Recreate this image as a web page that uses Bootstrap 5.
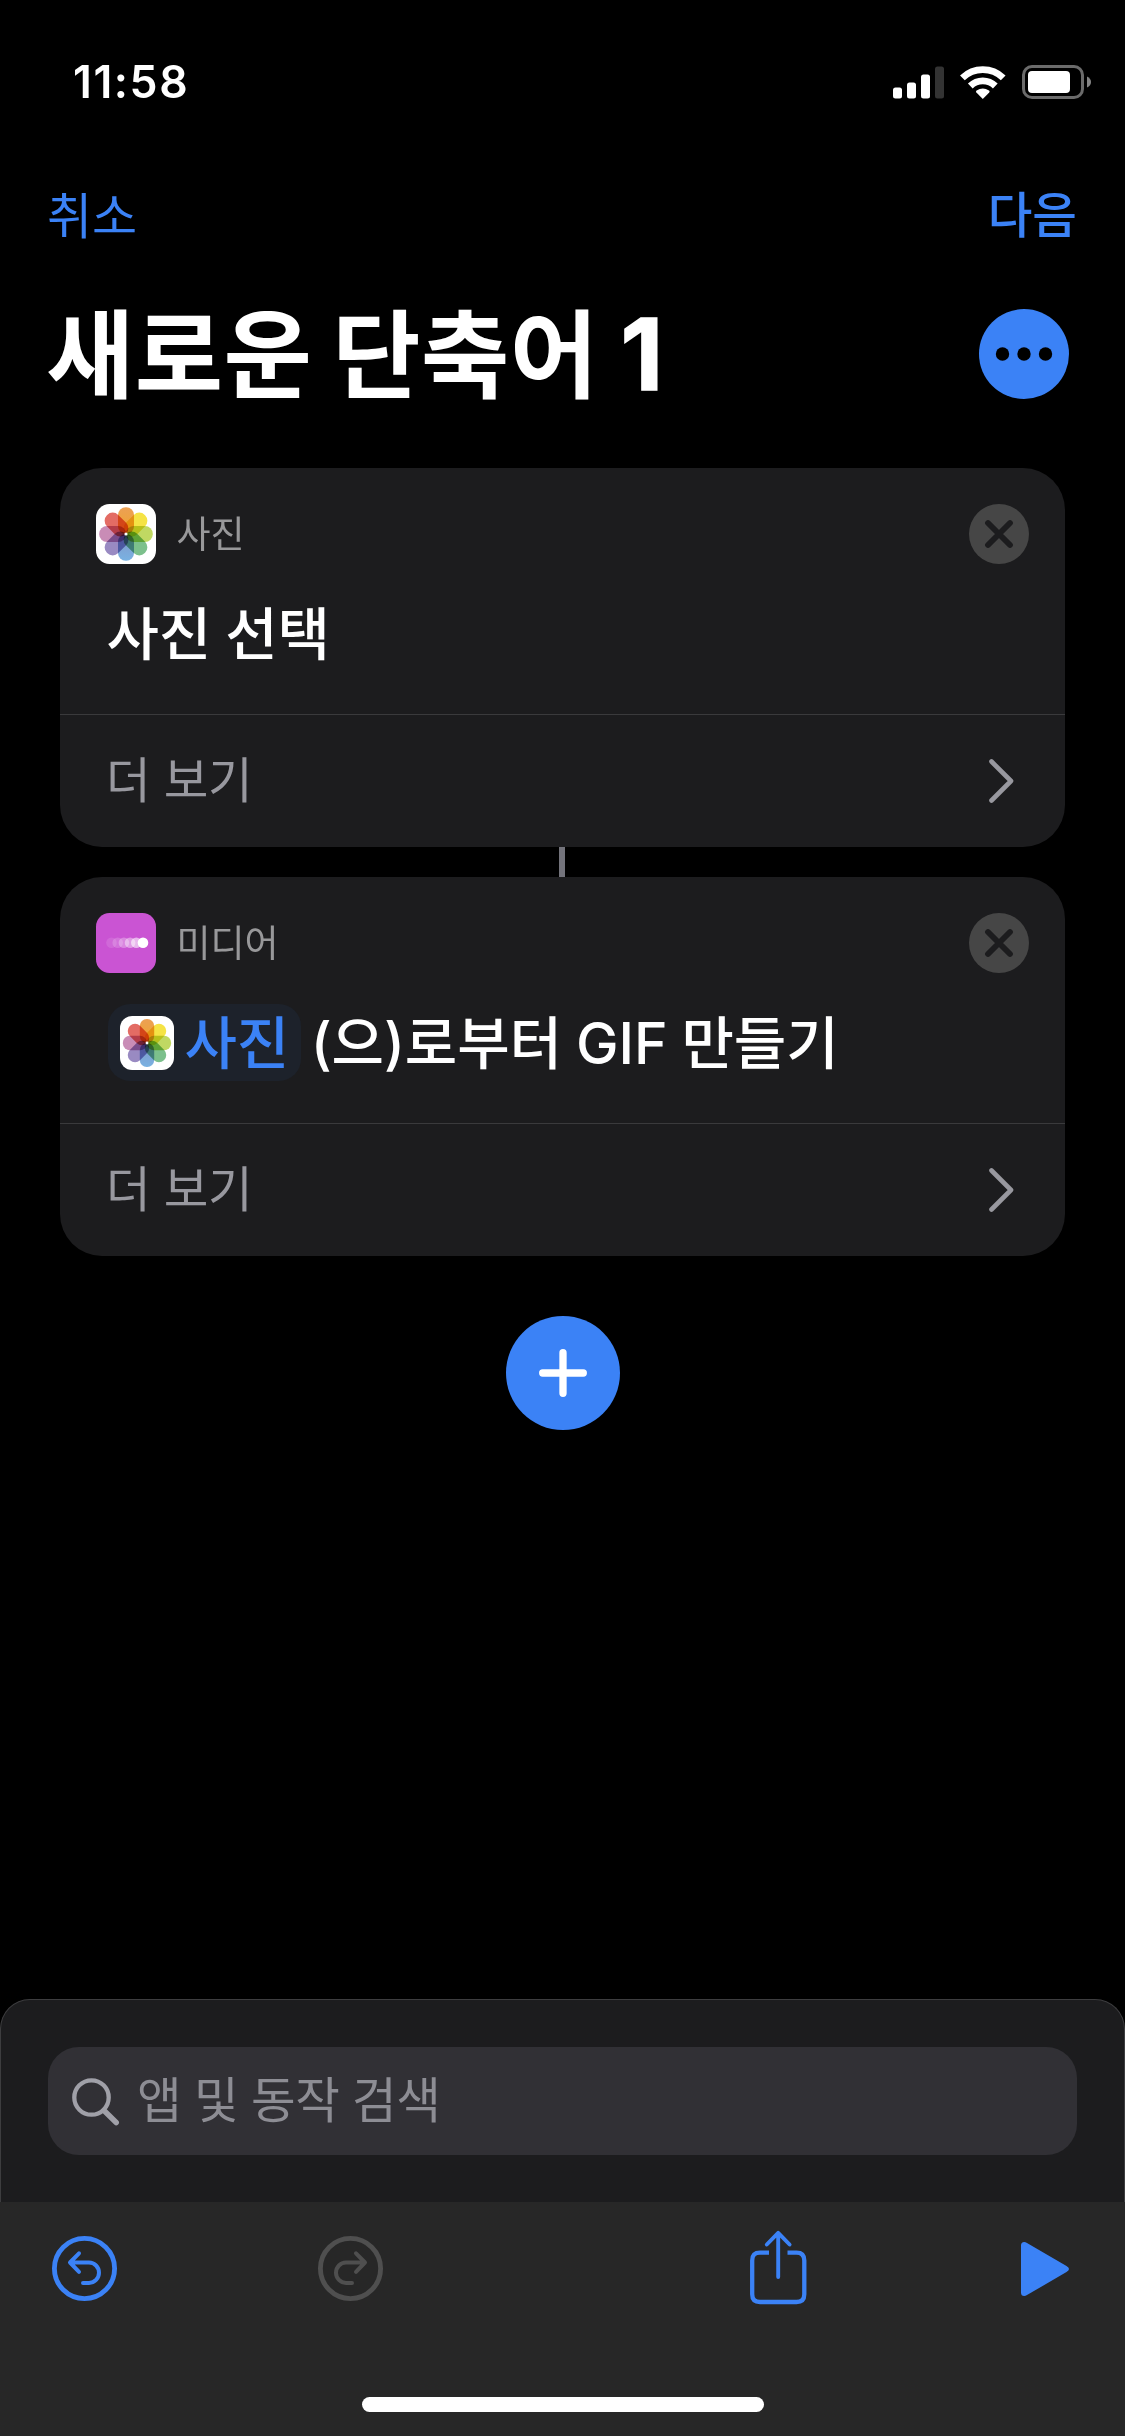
<!DOCTYPE html>
<html lang="ko" data-bs-theme="dark">
<head>
<meta charset="utf-8">
<meta name="viewport" content="width=device-width, initial-scale=1">
<title>새로운 단축어 1</title>
<link href="https://cdn.jsdelivr.net/npm/bootstrap@5.3.0/dist/css/bootstrap.min.css" rel="stylesheet">
<style>
  :root { --accent: #3b82f6; --panel: #1c1c1e; --muted: #98989f; }
  body { background: #000; color: #fff; font-family: Inter, "Noto Sans CJK KR", sans-serif; line-height: 1; }
  svg { display: block; flex-shrink: 0; overflow: visible; }
  .screen { height: 2436px; overflow: hidden; }
  .status-bar { height: 164px; padding: 0 34px 0 73px; }
  .clock { font-size: 44.5px; font-weight: 600; letter-spacing: 1.6px; }
  .status-icons { gap: 16px; }
  .top-nav { height: 104px; padding: 0 48px 0 47px; font-size: 49px; }
  .next-link { font-weight: 500; font-size: 48.5px; }
  .text-accent { color: var(--accent); }
  .title-row { height: 172px; padding: 0 56px 0 46px; }
  .screen-title { font-size: 96px; font-weight: 700; letter-spacing: .4px; word-spacing: -3px; line-height: 1; }
  .title-num { font-size: 99px; margin-left: 2px; letter-spacing: 0; -webkit-text-stroke: 1.5px #fff; }
  .round-btn { background: var(--accent); width: 90px; height: 90px; }
  .add-btn { width: 114px; height: 114px; margin-top: 60px; }
  .flow { padding: 28px 60px 0; }
  .action-card { background: var(--panel); border: 0; border-radius: 42px; width: 100%; height: 379px; }
  .action-head { height: 246px; padding: 36px 36px 0; }
  .action-app { gap: 20.5px; color: #98989a; font-size: 37px; }
  .action-text { height: 77px; margin: 31px 0 0 12px; font-size: 57px; font-weight: 500; letter-spacing: -.1px; word-spacing: -1px; }
  .action-text .phrase { padding-top: 1px; }
  .action-text > .phrase:first-child { margin-left: -1.5px; }
  .photo-chip { background: #1d222b; border-radius: 22px; height: 77px; padding: 0 12px; gap: 10.5px; margin-right: 9.5px; }
  .action-more { border-top: 1px solid #3a3a3c; height: 133px; padding: 0 51px 0 46px; font-size: 48.5px; letter-spacing: -.3px; color: var(--muted); }
  .link-line { width: 6px; height: 30px; background: #73737b; margin-right: 2px; }
  .sheet { background: var(--panel); border: 1px solid #3d3d3f; border-bottom: 0; border-radius: 30px 30px 0 0; height: 203px; padding: 47px 47px 0; }
  .search-box { background: #313035; border-radius: 31px; height: 108px; padding: 1px 24px 0; gap: 17px; font-size: 48.5px; letter-spacing: -.4px; word-spacing: -.5px; color: #8d8d94; }
  .tool-area { background: #272727; height: 234px; }
  .tool-row { height: 133px; padding: 0 56px 0 52px; }
  .tools-left { gap: 200.5px; }
  .tools-right { gap: 214px; }
  .share-icon { margin-bottom: 5px; }
  .home-bar { width: 402px; height: 15px; border-radius: 8px; background: #fff; margin-top: 62px; }
  .petals { isolation: isolate; }
  .petals rect { mix-blend-mode: multiply; }
</style>
</head>
<body>
<svg width="0" height="0" class="position-absolute" aria-hidden="true">
  <defs>
    <linearGradient id="gN" x1="0" y1="0" x2="0" y2="1"><stop offset="0" stop-color="#eca055"/><stop offset="1" stop-color="#f0a62a"/></linearGradient>
    <linearGradient id="gS" x1="0" y1="0" x2="0" y2="1"><stop offset="0" stop-color="#79b2e2"/><stop offset="1" stop-color="#8496c8"/></linearGradient>
    <symbol id="photos" viewBox="0 0 60 60">
      <rect width="60" height="60" rx="13.5" fill="#fff"/>
      <g class="petals">
        <rect x="22" y="3.2" width="16" height="26.8" rx="7.8" fill="url(#gN)"/>
        <rect x="22" y="3.2" width="16" height="26.8" rx="7.8" fill="#f5e345" transform="rotate(45 30 30)"/>
        <rect x="22" y="3.2" width="16" height="26.8" rx="7.8" fill="#c0d862" transform="rotate(90 30 30)"/>
        <rect x="22" y="3.2" width="16" height="26.8" rx="7.8" fill="#7cc08c" transform="rotate(135 30 30)"/>
        <rect x="22" y="3.2" width="16" height="26.8" rx="7.8" fill="url(#gS)" transform="rotate(180 30 30)"/>
        <rect x="22" y="3.2" width="16" height="26.8" rx="7.8" fill="#998ac2" transform="rotate(225 30 30)"/>
        <rect x="22" y="3.2" width="16" height="26.8" rx="7.8" fill="#c98cb6" transform="rotate(270 30 30)"/>
        <rect x="22" y="3.2" width="16" height="26.8" rx="7.8" fill="#e36c64" transform="rotate(315 30 30)"/>
      </g>
      <circle cx="30" cy="30" r="1.6" fill="#fff"/>
    </symbol>
    <symbol id="close" viewBox="0 0 60 60">
      <circle cx="30" cy="30" r="30" fill="#464646"/>
      <path d="M19 19 41 41M41 19 19 41" stroke="#1c1c1e" stroke-width="5.8" stroke-linecap="round"/>
    </symbol>
    <symbol id="chevron" viewBox="0 0 25 44">
      <path d="M2.5 2.5 22 22 2.5 41.5" fill="none" stroke="#98989f" stroke-width="4.6" stroke-linecap="round" stroke-linejoin="round"/>
    </symbol>
    <symbol id="turn" viewBox="0 0 65 65">
      <g fill="none" stroke="currentColor" stroke-linecap="round" stroke-linejoin="round">
        <circle cx="32.5" cy="32.5" r="30.1" stroke-width="4.8"/>
        <path d="M27 17.3 18 26.5 27 35.8M18.5 26.5H37a10 10.2 0 0 1 0 20.4H31" stroke-width="4"/>
      </g>
    </symbol>
  </defs>
</svg>

<div class="screen d-flex flex-column">
  <div class="status-bar d-flex justify-content-between align-items-center">
    <div class="clock">11:58</div>
    <div class="status-icons d-flex align-items-center">
      <svg width="51" height="33" fill="#fff"><rect y="21.5" width="9" height="11" rx="2.5"/><rect x="14" y="16.5" width="9" height="16" rx="2.5"/><rect x="28" y="8.5" width="9" height="24" rx="2.5"/><rect x="42" y=".5" width="9" height="32" rx="2.5" fill="#333"/></svg>
      <svg width="46" height="33"><g fill="none" stroke="#fff" stroke-width="6.8"><path d="M2.4 11.9A29.4 29.4 0 0 1 43.2 11.9"/><path d="M10.3 20A18 18 0 0 1 35.3 20"/></g><path d="M22.8 33 16.4 26.4q-1-1.1.2-1.9 6.2-4 12.4 0 1.2.8.2 1.9Z" fill="#fff"/></svg>
      <svg width="69" height="34"><rect x="1.5" y="1.5" width="59" height="31" rx="8.5" fill="none" stroke="#6b6b6b" stroke-width="3"/><rect x="6" y="6" width="42" height="22" rx="4" fill="#fff"/><path d="M65 11.5q4 2 4 5.5t-4 5.5Z" fill="#858585"/></svg>
    </div>
  </div>

  <nav class="top-nav d-flex justify-content-between align-items-center text-accent">
    <span>취소</span>
    <span class="next-link">다음</span>
  </nav>

  <header class="title-row d-flex justify-content-between align-items-center">
    <h1 class="screen-title m-0">새로운 단축어 <span class="title-num">1</span></h1>
    <div class="round-btn rounded-circle d-flex align-items-center justify-content-center">
      <svg width="58" height="14"><circle cx="7.5" cy="7" r="6.7"/><circle cx="29" cy="7" r="6.7"/><circle cx="50.5" cy="7" r="6.7"/></svg>
    </div>
  </header>

  <main class="flow d-flex flex-column align-items-center flex-grow-1">
    <section class="card action-card">
      <div class="action-head">
        <div class="action-app d-flex align-items-center">
          <svg width="60" height="60"><use href="#photos"/></svg>
          <span>사진</span>
          <svg class="ms-auto" width="60" height="60"><use href="#close"/></svg>
        </div>
        <div class="action-text d-flex align-items-center"><span class="phrase">사진 선택</span></div>
      </div>
      <div class="action-more d-flex justify-content-between align-items-center">
        <span>더 보기</span>
        <svg width="25" height="44"><use href="#chevron"/></svg>
      </div>
    </section>

    <div class="link-line"></div>

    <section class="card action-card">
      <div class="action-head">
        <div class="action-app d-flex align-items-center">
          <svg width="60" height="60"><rect width="60" height="60" rx="13.5" fill="#ca54d3"/><g fill="#fff"><circle cx="15.5" cy="29.7" r="5.3" opacity=".12"/><circle cx="21.7" cy="29.7" r="5.3" opacity=".18"/><circle cx="27.9" cy="29.7" r="5.3" opacity=".3"/><circle cx="34.1" cy="29.7" r="5.3" opacity=".42"/><circle cx="40.3" cy="29.7" r="5.3" opacity=".58"/><circle cx="47" cy="29.7" r="5.3"/></g></svg>
          <span>미디어</span>
          <svg class="ms-auto" width="60" height="60"><use href="#close"/></svg>
        </div>
        <div class="action-text d-flex align-items-center">
          <span class="photo-chip d-flex align-items-center">
            <svg width="54" height="54"><use href="#photos"/></svg>
            <span class="phrase text-accent">사진</span>
          </span>
          <span class="phrase">(으)로부터 GIF 만들기</span>
        </div>
      </div>
      <div class="action-more d-flex justify-content-between align-items-center">
        <span>더 보기</span>
        <svg width="25" height="44"><use href="#chevron"/></svg>
      </div>
    </section>

    <div class="round-btn add-btn rounded-circle d-flex align-items-center justify-content-center">
      <svg width="48" height="48"><path d="M24 3.7V44.3M3.7 24H44.3" stroke="#fff" stroke-width="7.3" stroke-linecap="round"/></svg>
    </div>
  </main>

  <div class="sheet">
    <div class="search-box d-flex align-items-center">
      <svg width="48" height="48" fill="none" stroke="#a0a0a8" stroke-linecap="round"><circle cx="19.5" cy="19.5" r="17.2" stroke-width="4.3"/><path d="M32 32.5 44.2 44.5" stroke-width="5.5"/></svg>
      <span>앱 및 동작 검색</span>
    </div>
  </div>

  <footer class="tool-area d-flex flex-column align-items-center">
    <div class="tool-row w-100 d-flex justify-content-between align-items-center">
      <div class="tools-left d-flex align-items-center">
        <svg class="text-accent" width="65" height="65"><use href="#turn"/></svg>
        <svg width="65" height="65" color="#4f4f4f"><use href="#turn" transform="translate(65 0) scale(-1 1)"/></svg>
      </div>
      <div class="tools-right d-flex align-items-center text-accent">
        <svg class="share-icon" width="57" height="77" fill="none" stroke="currentColor" stroke-width="4.3"><path d="M19 24.6H10Q2.2 24.6 2.2 32.4V66.2Q2.2 74 10 74H46.5Q54.3 74 54.3 66.2V32.4Q54.3 24.6 46.5 24.6H37.5"/><path d="M28.2 49V6M16.8 16.5 28.2 4.8 39.6 16.5" stroke-width="3.9" stroke-linecap="round" stroke-linejoin="round"/></svg>
        <svg width="48" height="54"><path d="M0 3.5Q0 0 3.2 0 4.5 0 6 .9L45.500 24Q48 25.6 48 27T45.5 30L6 53.1Q4.5 54 3.2 54 0 54 0 50.5Z" fill="currentColor"/></svg>
      </div>
    </div>
    <div class="home-bar"></div>
  </footer>
</div>
<script src="https://cdn.jsdelivr.net/npm/bootstrap@5.3.0/dist/js/bootstrap.bundle.min.js"></script>
</body>
</html>
